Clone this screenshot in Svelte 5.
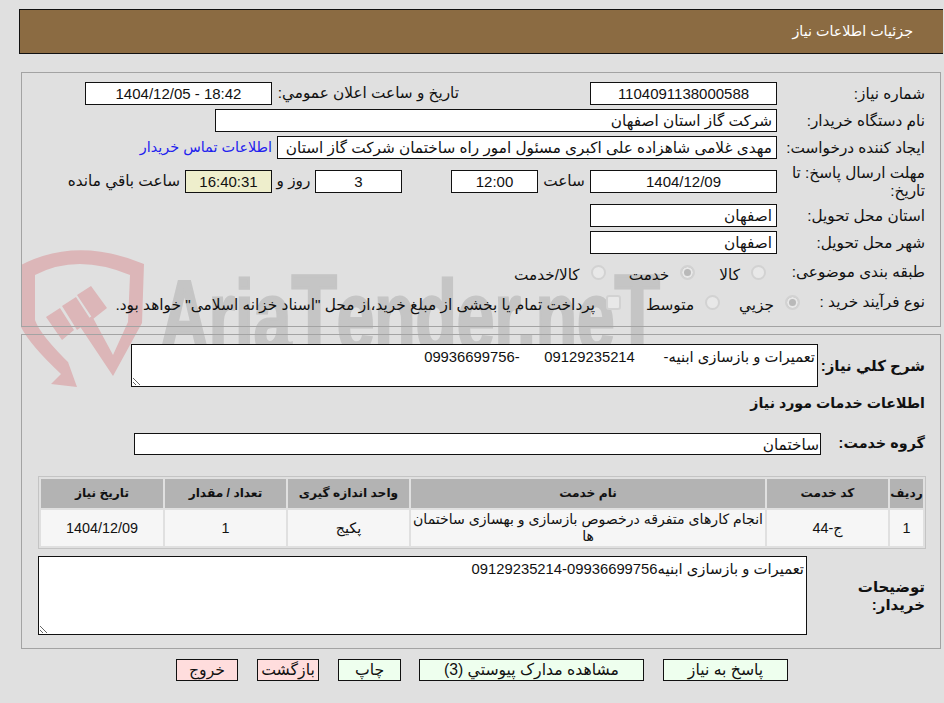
<script>
  const cols = [
    { h: 'ردیف', v: '1' },
    { h: 'کد خدمت', v: 'ج-44' },
    { h: 'نام خدمت', v: 'انجام کارهای متفرقه درخصوص بازسازی و بهسازی ساختمان ها' },
    { h: 'واحد اندازه گیری', v: 'پکیج' },
    { h: 'تعداد / مقدار', v: '1' },
    { h: 'تاریخ نیاز', v: '1404/12/09' }
  ];
  const buttons = [
    { t: 'پاسخ به نياز', w: 125 },
    { t: 'مشاهده مدارک پیوستي (3)', w: 225 },
    { t: 'چاپ', w: 63, tight: true },
    { t: 'بازگشت', w: 62, red: true },
    { t: 'خروج', w: 62, red: true }
  ];
</script>

<div class="page">
  <svg class="mark" width="944" height="400" viewBox="0 0 944 400" aria-hidden="true">
    <path class="pink" fill-rule="evenodd" d="M21 265 Q77 236 144 264 L142 323 L113 376 L79 325 L92 316 L113 355 L128 322 L130 275 Q77 253 35 275 L35 320 Q40 335 72 366 L68 362 L77 387 L51 384 L61 374 Q30 345 21 327 Z" />
    <path class="pink" d="M46 317 L60 308 L74 330 L62 340 Z M62 306 L76 297 L91 320 L77 330 Z M77 295 L91 286 L107 308 L93 319 Z" />
    <text class="wm" x="160" y="351" textLength="500" lengthAdjust="spacingAndGlyphs">Aria<tspan class="big">T</tspan>ender.ne<tspan class="big">T</tspan></text>
  </svg>

  <header class="title">جزئیات اطلاعات نیاز</header>

  <section class="panel first">
    <div class="row">
      <div class="lbl">شماره نياز:</div>
      <div class="box w187 ctr ltr">1104091138000588</div>
      <div class="pub">تاريخ و ساعت اعلان عمومي:</div>
      <div class="box w187 ctr ltr">1404/12/05 - 18:42</div>
    </div>
    <div class="row">
      <div class="lbl">نام دستگاه خريدار:</div>
      <div class="box w562">شرکت گاز استان اصفهان</div>
    </div>
    <div class="row">
      <div class="lbl">ایجاد کننده درخواست:</div>
      <div class="box w500 clip">مهدی غلامی شاهزاده علی اکبری مسئول امور راه ساختمان شرکت گاز استان</div>
      <span class="link">اطلاعات تماس خريدار</span>
    </div>
    <div class="row tall">
      <div class="lbl">مهلت ارسال پاسخ: تا تاریخ:</div>
      <div class="box w187 ctr ltr">1404/12/09</div>
      <span class="t-saat">ساعت</span>
      <div class="box w87 ctr ltr">12:00</div>
      <div class="box w87 ctr ltr days">3</div>
      <span class="t-roz">روز و</span>
      <div class="box w87 ctr ltr timer">16:40:31</div>
      <span class="t-left">ساعت باقي مانده</span>
    </div>
    <div class="row">
      <div class="lbl">استان محل تحویل:</div>
      <div class="box w187">اصفهان</div>
    </div>
    <div class="row">
      <div class="lbl">شهر محل تحویل:</div>
      <div class="box w187">اصفهان</div>
    </div>
    <div class="row opts r7">
      <div class="lbl">طبقه بندی موضوعی:</div>
      <span class="radio a"></span><span class="opt o1">کالا</span>
      <span class="radio on"></span><span class="opt o2">خدمت</span>
      <span class="radio"></span><span class="opt">کالا/خدمت</span>
    </div>
    <div class="row opts r8">
      <div class="lbl short">نوع فرآیند خرید :</div>
      <span class="radio on"></span><span class="opt o3">جزيي</span>
      <span class="radio"></span><span class="opt o4">متوسط</span>
      <span class="check"></span><span class="opt long">پرداخت تمام یا بخشی از مبلغ خرید،از محل "اسناد خزانه اسلامی" خواهد بود.</span>
    </div>
  </section>

  <section class="panel second">
    <div class="desc-row">
      <div class="blbl">شرح كلي نياز:</div>
      <div class="area a1">تعمیرات و بازسازی ابنیه-       09129235214      -09936699756</div>
    </div>
    <h2 class="sub">اطلاعات خدمات مورد نياز</h2>
    <div class="group-row">
      <div class="blbl">گروه خدمت:</div>
      <div class="box group">ساختمان</div>
    </div>
    <table class="grid">
      <thead>
        <tr>
          {#each cols as c}<th>{c.h}</th>{/each}
        </tr>
      </thead>
      <tbody>
        <tr>
          {#each cols as c}<td>{c.v}</td>{/each}
        </tr>
      </tbody>
    </table>
    <div class="note-row">
      <div class="blbl nlbl">توضيحات خريدار:</div>
      <div class="area a2">تعمیرات و بازسازی ابنیه09936699756-09129235214</div>
    </div>
  </section>

  <nav class="actions">
    {#each buttons as b}
      <button type="button" class:red={b.red} class:tight={b.tight} style="width:{b.w}px">{b.t}</button>
    {/each}
  </nav>
</div>

<style>
  :global(body) { margin: 0; background: #e0e0e0; }
  .page {
    position: relative;
    width: 944px;
    height: 703px;
    overflow: hidden;
    direction: rtl;
    box-sizing: border-box;
    padding-top: 9px;
    font: 15.3px/1.2 "Liberation Sans", "DejaVu Sans", sans-serif;
    color: #111;
  }
  .mark { position: absolute; left: 0; top: 0; z-index: 0; }
  .pink { fill: #dcb6b8; }
  .wm { font: bold 100px "Liberation Sans", sans-serif; fill: #c5c5c5; stroke: #c5c5c5; stroke-width: 3px; direction: ltr; }
  .big { font-size: 110px; }
  .title {
    position: relative; z-index: 1;
    margin-left: 19px; margin-right: 1px;
    height: 43px; line-height: 43px;
    background: #8b6b42; color: #fff;
    border: 1px solid #111;
    border-right: 0;
    padding-right: 30px;
    font-size: 14.3px;
  }
  .panel {
    position: relative; z-index: 1;
    margin-right: 3px;
    width: 920px;
    box-sizing: border-box;
    border: 1px solid #a3a3a3;
  }
  .first {
    margin-top: 18px; height: 255px;
    padding: 9px 14px 0 0;
    display: flex; flex-direction: column; gap: 4px;
  }
  .second { margin-top: 7px; height: 315px; padding: 9px 14px 0 0; }
  .row { display: flex; align-items: center; height: 23px; flex: none; }
  .tall { height: 37px; }
  .lbl { width: 148px; margin-right: 1px; flex: none; line-height: 18px; padding-left: 5px; box-sizing: border-box; }
  .short { width: 125px; }
  .box {
    height: 23px; line-height: 21px; box-sizing: border-box; flex: none;
    border: 1px solid #111; background: #fff; padding: 0 4px; white-space: nowrap;
  }
  .clip { overflow: hidden; }
  .ctr { text-align: center; }
  .ltr { direction: ltr; font-size: 15px; }
  .w187 { width: 187px; }
  .w562 { width: 562px; }
  .w500 { width: 500px; }
  .w87 { width: 87px; }
  .pub { width: 318px; flex: none; padding: 0 131px 0 5px; box-sizing: border-box; white-space: nowrap; }
  .link { color: #2222ee; margin-right: 5px; white-space: nowrap; font-size: 14.4px; }
  .t-saat { width: 52px; flex: none; text-align: center; }
  .days { margin-right: 49px; }
  .t-roz { width: 43px; flex: none; text-align: center; }
  .timer { background: #eeeecc; }
  .t-left { margin-right: 5px; white-space: nowrap; }
  .r7 { height: 28px; }
  .r8 { height: 24px; }
  .radio, .check {
    width: 15px; height: 15px; flex: none; box-sizing: border-box;
    border: 2px solid #d2d2d2; background: #e8e8e8; border-radius: 50%;
  }
  .radio.on { background: #b9b9b9; box-shadow: inset 0 0 0 2px #e8e8e8; }
  .check { border-radius: 3px; }
  .r7 .radio.a { margin-right: 11px; }
  .opt { margin-right: 11px; white-space: nowrap; padding-top: 6px; }
  .long { font-size: 15.4px; }
  .o1 { margin-left: 24px; }
  .o2 { margin-left: 23px; }
  .o3 { margin-left: 19px; }
  .o4 { margin-left: 25px; }
  .desc-row { display: flex; align-items: center; height: 43px; }
  .blbl { font-weight: bold; font-size: 15px; white-space: nowrap; margin-right: 1px; }
  .desc-row .blbl { width: 107px; flex: none; }
  .area {
    box-sizing: border-box; border: 1px solid #111; background: #fff;
    overflow: auto; resize: both; white-space: pre-wrap; padding: 3px 2px 2px; line-height: 18px; flex: none;
    font-size: 14.8px;
  }
  .a1 { width: 687px; height: 43px; }
  .sub { font-size: 14.2px; font-weight: bold; margin: 6px 1px 0 0; height: 20px; line-height: 20px; }
  .group-row { display: flex; align-items: center; height: 22px; margin-top: 20px; }
  .group-row .blbl { width: 104px; flex: none; font-size: 14.4px; }
  .group { width: 687px; height: 22px; padding: 0 1px; line-height: 21px; }
  .grid {
    margin: 21px 0 0 0; width: 888px; table-layout: fixed;
    border: 1px solid #c4c4c4; border-spacing: 2px; border-collapse: separate;
  }
  .grid th {
    background: #b3b3b3; height: 29px; padding: 0; font-size: 12.2px; font-weight: bold;
  }
  .grid td {
    background: #f6f6f6; height: 36px; padding: 0 1px; text-align: center; font-size: 14.4px; line-height: 17px; box-sizing: border-box;
  }
  .grid td:nth-child(3) { font-size: 14.1px; }
  .grid th:nth-child(1) { width: 33px; }
  .grid th:nth-child(2) { width: 121px; }
  .grid th:nth-child(3) { width: 354px; }
  .grid th:nth-child(4) { width: 121px; }
  .grid th:nth-child(5) { width: 121px; }
  .grid th:nth-child(6) { width: 122px; }
  .note-row { display: flex; align-items: center; margin-top: 7px; height: 79px; }
  .nlbl { width: 118px; flex: none; white-space: normal; line-height: 18px; padding-left: 30px; box-sizing: border-box; }
  .a2 { width: 769px; height: 79px; }
  .actions {
    position: relative; z-index: 1;
    display: flex; gap: 19px; margin-top: 10px; padding-right: 156px;
  }
  button {
    height: 22px; padding: 0; box-sizing: border-box; flex: none;
    border: 1px solid #111; background: #eeffee; color: #111; font: inherit; font-size: 15.7px; line-height: 20px;
  }
  button.red { background: #ffdddd; }
  button.tight { margin-right: -1px; }
</style>
